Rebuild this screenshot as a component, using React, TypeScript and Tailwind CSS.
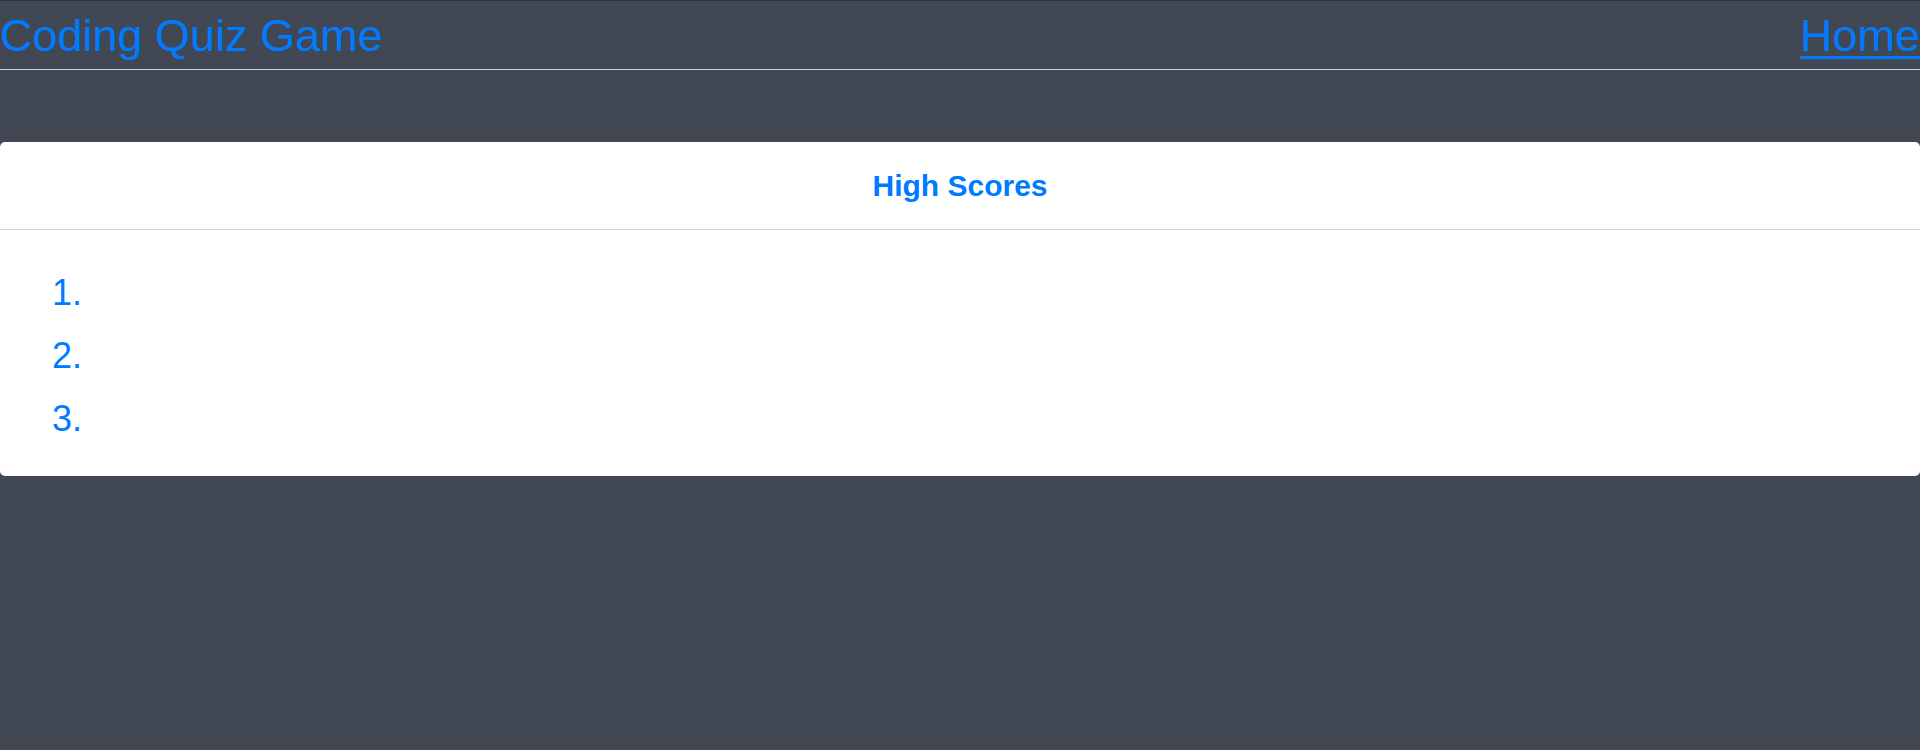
import React from 'react';

const scores = ['', '', ''];

const App = () => {
  return (
    <div className="min-h-[750px] bg-[#414853] font-['Liberation_Sans',Arial,sans-serif] text-[#007bff]">
      {/* Top bar */}
      <header className="border-t border-[#30353c]">
        <div className="flex justify-between items-center h-[68px]">
          <h1 className="text-[45px] leading-none">Coding Quiz Game</h1>
          <a href="#" className="text-[45px] leading-none underline underline-offset-[5px] decoration-[3px]">
            Home
          </a>
        </div>
        <hr className="border-0 h-px bg-[#d4d4d4]" />
      </header>

      <div className="pt-[72px]">
        <div className="bg-white rounded-[5px]">
          <div className="h-[88px] flex items-center justify-center border-b border-[#d6d6d6]">
            <h5 className="text-[30px] font-bold leading-none">High Scores</h5>
          </div>
          <ol className="pt-[31px] pb-[26px]">
            {scores.map((s, i) => (
              <li key={i} className="h-[63px] flex items-center pl-[52px] text-[36px]">
                {i + 1}.{s && <span className="ml-3">{s}</span>}
              </li>
            ))}
          </ol>
        </div>
      </div>
    </div>
  );
};

export default App;
